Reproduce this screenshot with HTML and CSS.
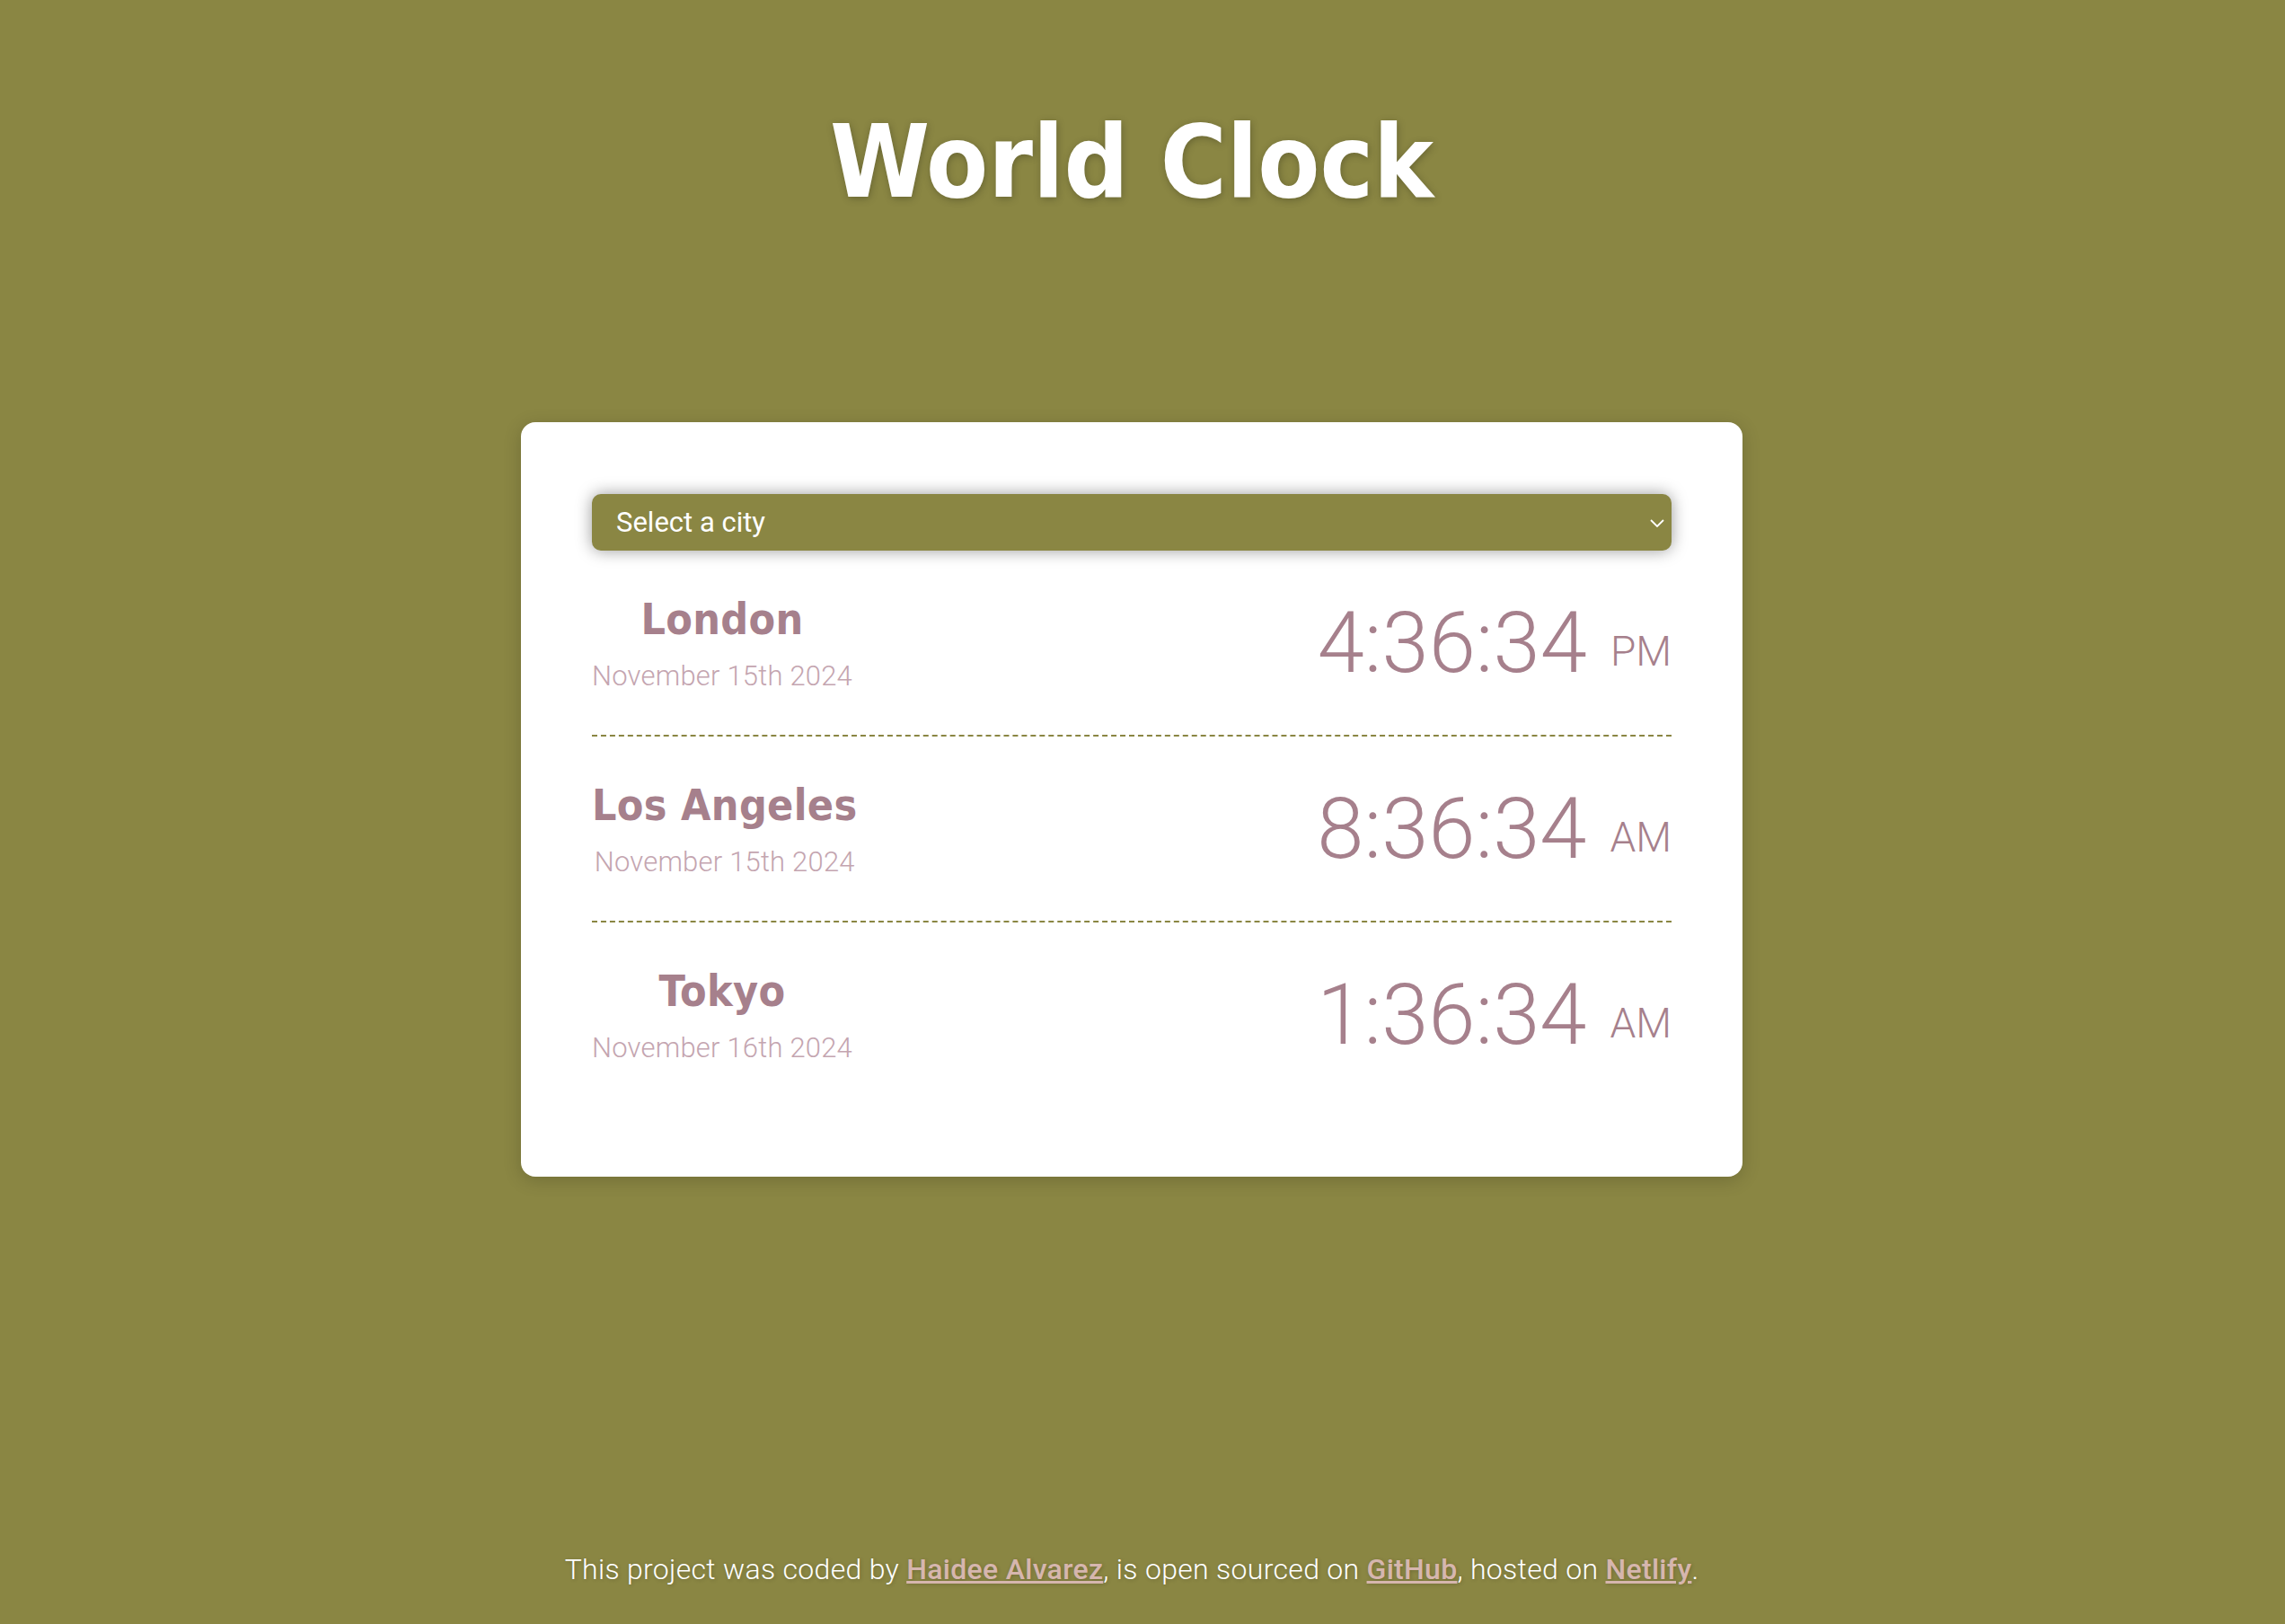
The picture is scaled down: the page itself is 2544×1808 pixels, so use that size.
FILE: index.html
```html
<!DOCTYPE html>
<html lang="en">
<head>
<meta charset="utf-8">
<title>World Clock</title>
<link rel="stylesheet" href="styles.css">
</head>
<body>
<div class="page">
  <h1 class="title">World Clock</h1>
  <main class="card">
    <div class="select-wrap">
      <select class="city-select">
        <option>Select a city</option>
      </select>
      <svg class="chevron" viewBox="0 0 16 9" aria-hidden="true"><path d="M1 1l7 7 7-7"/></svg>
    </div>
    <div class="cities">
      <div class="city">
        <div class="city-info">
          <h2 class="city-name">London</h2>
          <div class="city-date">November 15th 2024</div>
        </div>
        <div class="city-time">4:36:34<span class="ampm">PM</span></div>
      </div>
      <div class="city">
        <div class="city-info">
          <h2 class="city-name">Los Angeles</h2>
          <div class="city-date">November 15th 2024</div>
        </div>
        <div class="city-time">8:36:34<span class="ampm">AM</span></div>
      </div>
      <div class="city">
        <div class="city-info">
          <h2 class="city-name">Tokyo</h2>
          <div class="city-date">November 16th 2024</div>
        </div>
        <div class="city-time">1:36:34<span class="ampm">AM</span></div>
      </div>
    </div>
  </main>
  <footer class="footer">This project was coded by <a href="#">Haidee Alvarez</a>, is open sourced on <a href="#">GitHub</a>, hosted on <a href="#">Netlify</a>.</footer>
</div>
</body>
</html>
```
FILE: styles.css
```css
body {
  margin: 0;
  background: #8a8643;
}

.page {
  min-height: 100vh;
  box-sizing: border-box;
  padding-right: 24px;
  display: flex;
  flex-direction: column;
  align-items: center;
}

.title {
  margin: 123px 0 0;
  font-family: "DejaVu Sans Condensed", "DejaVu Sans", sans-serif;
  font-stretch: condensed;
  font-weight: 700;
  font-size: 112px;
  line-height: 115px;
  color: #ffffff;
  text-shadow: 1px 2px 8px rgba(0, 0, 0, 0.25);
}

.card {
  margin-top: 232px;
  width: 1360px;
  box-sizing: border-box;
  padding: 80px 79px 78px;
  background: #ffffff;
  border-radius: 16px;
  box-shadow: 0 4px 20px rgba(0, 0, 0, 0.18);
}

.select-wrap {
  position: relative;
}

.city-select {
  display: block;
  width: 100%;
  height: 63px;
  appearance: none;
  -webkit-appearance: none;
  border: none;
  border-radius: 10px;
  background: #8a8643;
  color: #ffffff;
  font-family: Roboto, sans-serif;
  font-weight: 400;
  font-size: 31px;
  padding: 0 0 0 27px;
  box-shadow: 0 0 18px rgba(0, 0, 0, 0.4);
}

.chevron {
  position: absolute;
  right: 8px;
  top: 50%;
  width: 16px;
  height: 9px;
  margin-top: -4px;
  fill: none;
  stroke: #ffffff;
  stroke-width: 1.8;
}

.city {
  display: flex;
  justify-content: space-between;
  align-items: center;
  padding: 48px 0 47px;
  border-bottom: 2px dashed #8a8643;
}

.city:last-child {
  border-bottom: none;
}

.city-info {
  display: flex;
  flex-direction: column;
  align-items: center;
}

.city-name {
  margin: 0;
  font-family: "DejaVu Sans Condensed", "DejaVu Sans", sans-serif;
  font-stretch: condensed;
  font-weight: 700;
  font-size: 48px;
  line-height: 56px;
  letter-spacing: 0.3px;
  color: #a6808c;
}

.city-date {
  margin-top: 18px;
  font-family: Roboto, sans-serif;
  font-weight: 300;
  font-size: 31px;
  line-height: 36px;
  letter-spacing: 0.2px;
  color: #c4a5b0;
}

.city-time {
  font-family: Roboto, sans-serif;
  font-weight: 300;
  font-size: 94px;
  line-height: 94px;
  color: #a6808c;
  white-space: nowrap;
}

.ampm {
  font-size: 46px;
  line-height: 1;
  margin-left: 26px;
  vertical-align: 7px;
}

.footer {
  margin-top: auto;
  padding-bottom: 43px;
  font-family: Roboto, sans-serif;
  font-weight: 300;
  font-size: 32px;
  line-height: 36px;
  letter-spacing: 0.3px;
  color: #ffffff;
  text-shadow: 1px 1px 4px rgba(0, 0, 0, 0.2);
}

.footer a {
  color: #d6b6ae;
  font-weight: 500;
  text-decoration: underline;
}
```
